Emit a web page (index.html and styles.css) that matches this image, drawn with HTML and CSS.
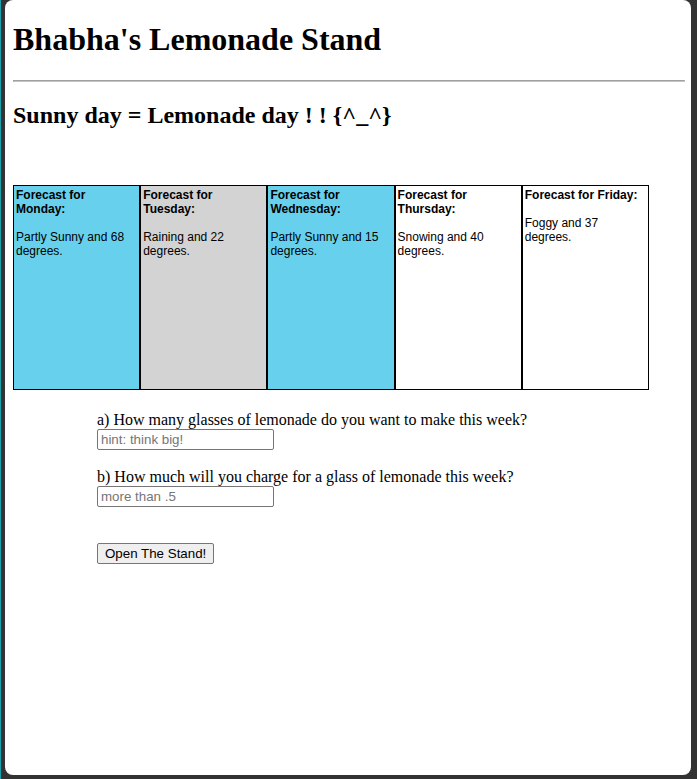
FILE: index.html
```html
<!DOCTYPE html>
<html>
<head>
<meta charset="utf-8">
<title>Bhabha's Lemonade Stand</title>
<link rel="stylesheet" href="styles.css">
</head>
<body>
<div class="frame">
  <h1 class="title">Bhabha's Lemonade Stand</h1>
  <hr class="rule">
  <h2 class="subtitle">Sunny day = Lemonade day ! ! {^_^}</h2>
  <div class="forecast">
    <div class="day day-sunny"><b>Forecast for Monday:</b><br><br>Partly Sunny and 68 degrees.</div>
    <div class="day day-rain"><b>Forecast for Tuesday:</b><br><br>Raining and 22 degrees.</div>
    <div class="day day-sunny"><b>Forecast for Wednesday:</b><br><br>Partly Sunny and 15 degrees.</div>
    <div class="day"><b>Forecast for Thursday:</b><br><br>Snowing and 40 degrees.</div>
    <div class="day"><b>Forecast for Friday:</b><br><br>Foggy and 37 degrees.</div>
  </div>
  <div class="questions">
    <label class="q-label" for="glasses">a) How many glasses of lemonade do you want to make this week?</label>
    <input class="q-input" id="glasses" type="text" placeholder="hint: think big!">
    <label class="q-label q-second" for="price">b) How much will you charge for a glass of lemonade this week?</label>
    <input class="q-input" id="price" type="text" placeholder="more than .5">
    <button class="open-btn" type="button">Open The Stand!</button>
  </div>
</div>
</body>
</html>
```
FILE: styles.css
```css
html {
  background: #333333;
  height: 100%;
}
body {
  margin: 0;
  height: 100%;
  border-left: 1px solid #1b9fa8;
  box-sizing: border-box;
  font-family: "Liberation Serif", "Times New Roman", serif;
  color: #000;
}
.frame {
  display: flow-root;
  margin: 0 6px 0 4px;
  height: 775px;
  box-sizing: border-box;
  padding: 0 6px 0 8px;
  background: #ffffff;
  border-radius: 8px;
}
.title {
  font-size: 32px;
  font-weight: bold;
  margin: 21.44px 0;
}
.rule {
  margin: 8px 0;
  height: 0;
  border-style: solid;
  border-width: 1px;
  border-color: #a0a0a0 #c4c4c4 #c4c4c4 #a0a0a0;
}
.subtitle {
  font-size: 24px;
  font-weight: bold;
  margin: 19.92px 0;
}
.forecast {
  display: flex;
  margin-top: 56px;
}
.day {
  width: 121.2px;
  height: 199px;
  flex: none;
  padding: 2px;
  border: 1px solid #000;
  font-family: "Liberation Sans", Arial, sans-serif;
  font-size: 12px;
  line-height: 14px;
  background: #ffffff;
}
.day-sunny {
  background: #66d0ed;
}
.day-rain {
  background: #d3d3d3;
}
.questions {
  display: flex;
  flex-direction: column;
  align-items: flex-start;
  margin: 21px 0 0 84px;
}
.q-label {
  font-size: 16px;
  line-height: 18px;
}
.q-second {
  margin-top: 18px;
}
.q-input {
  width: 177px;
  height: 21px;
  box-sizing: border-box;
  margin: 0;
  padding: 1px 3px;
  border: 1px solid #767676;
  border-radius: 2px;
  font-family: "Liberation Sans", Arial, sans-serif;
  font-size: 13.33px;
  color: #000;
  background: #fff;
}
.q-input::placeholder {
  color: #757575;
}
.open-btn {
  margin-top: 36px;
  height: 21px;
  box-sizing: border-box;
  padding: 1px 7px;
  border: 1px solid #767676;
  border-radius: 2px;
  background: #efefef;
  font-family: "Liberation Sans", Arial, sans-serif;
  font-size: 13.33px;
  color: #000;
}
```
